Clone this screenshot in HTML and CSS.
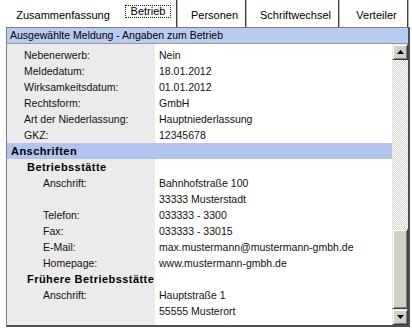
FILE: index.html
```html
<!DOCTYPE html>
<html lang="de">
<head>
    <meta charset="UTF-8">
    <meta name="viewport" content="width=device-width, initial-scale=1.0">
    <title>Angaben zum Betrieb</title>
    <link rel="stylesheet" href="styles.css">
</head>
<body>
    <div class="tabs">
        <div class="tab tab-first">Zusammenfassung</div>
        <div class="tab active"><span>Betrieb</span></div>
        <div class="tab tab-personen">Personen</div>
        <div class="tab tab-schrift">Schriftwechsel</div>
        <div class="tab tab-verteiler">Verteiler</div>
    </div>

    <div class="panel">
        <div class="panel-title">Ausgewählte Meldung - Angaben zum Betrieb</div>
        <div class="panel-body">
            <div class="list">
                <div class="row"><div class="label">Nebenerwerb:</div><div class="value">Nein</div></div>
                <div class="row"><div class="label">Meldedatum:</div><div class="value">18.01.2012</div></div>
                <div class="row"><div class="label">Wirksamkeitsdatum:</div><div class="value">01.01.2012</div></div>
                <div class="row"><div class="label">Rechtsform:</div><div class="value">GmbH</div></div>
                <div class="row"><div class="label">Art der Niederlassung:</div><div class="value">Hauptniederlassung</div></div>
                <div class="row"><div class="label">GKZ:</div><div class="value">12345678</div></div>

                <!-- Anschriften -->
                <div class="group">Anschriften</div>
                <div class="row"><div class="label head">Betriebsstätte</div><div class="value"></div></div>
                <div class="row"><div class="label lvl2">Anschrift:</div><div class="value">Bahnhofstraße 100</div></div>
                <div class="row"><div class="label lvl2"></div><div class="value">33333 Musterstadt</div></div>
                <div class="row"><div class="label lvl2">Telefon:</div><div class="value">033333 - 3300</div></div>
                <div class="row"><div class="label lvl2">Fax:</div><div class="value">033333 - 33015</div></div>
                <div class="row"><div class="label lvl2">E-Mail:</div><div class="value">max.mustermann@mustermann-gmbh.de</div></div>
                <div class="row"><div class="label lvl2">Homepage:</div><div class="value">www.mustermann-gmbh.de</div></div>
                <div class="row"><div class="label head">Frühere Betriebsstätte</div><div class="value"></div></div>
                <div class="row"><div class="label lvl2">Anschrift:</div><div class="value">Hauptstraße 1</div></div>
                <div class="row"><div class="label lvl2"></div><div class="value">55555 Musterort</div></div>
            </div>

            <div class="scrollbar">
                <div class="sb-btn">
                    <svg width="7" height="4" viewBox="0 0 7 4"><polygon points="0,4 3.5,0 7,4" fill="#000"/></svg>
                </div>
                <div class="sb-track"></div>
                <div class="sb-thumb"></div>
                <div class="sb-btn">
                    <svg width="7" height="4" viewBox="0 0 7 4"><polygon points="0,0 7,0 3.5,4" fill="#000"/></svg>
                </div>
            </div>
        </div>
    </div>
</body>
</html>
```

FILE: styles.css
```css
body {
    margin: 0;
    width: 412px;
    height: 331px;
    overflow: hidden;
    background-color: #fff;
    color: #000;
    font-family: "Liberation Sans", Arial, sans-serif;
    font-size: 10.5px;
}

/* tab strip */
.tabs {
    display: flex;
    height: 27px;
    font-size: 11px;
    line-height: 13px;
}
.tab {
    box-sizing: border-box;
    height: 27px;
    padding-top: 9px;
    text-align: center;
    white-space: nowrap;
    border-right: 1px solid #3f3f3f;
    box-shadow: 1px 0 0 #b4b4b4;
}
.tab-first {
    margin-left: 6px;
    width: 114px;
    border-right: none;
    box-shadow: none;
}
.tab.active {
    width: 57px;
    padding-top: 5px;
}
.tab.active span {
    display: inline-block;
    line-height: 11px;
    padding: 0 5px;
    border: 1px dotted #222;
}
.tab-personen {
    width: 69px;
    padding-left: 7px;
}
.tab-schrift {
    width: 93px;
    padding-left: 7px;
}
.tab-verteiler {
    width: 69px;
    padding-left: 7px;
}

/* panel */
.panel {
    box-sizing: border-box;
    margin-left: 6px;
    width: 404px;
    height: 300px;
    border: 1px solid #7c7c7c;
    border-right: 2px solid #505050;
    border-bottom: 2px solid #505050;
    display: flex;
    flex-direction: column;
}
.panel-title {
    box-sizing: border-box;
    height: 16px;
    line-height: 15px;
    padding-left: 3px;
    background-color: #b8cbf0;
    border-bottom: 1px solid #9a9a9a;
    white-space: nowrap;
}
.panel-body {
    flex: 1;
    min-height: 0;
    display: flex;
}
.list {
    flex: 1;
    overflow: hidden;
    padding-top: 3px;
    background: linear-gradient(to right, #ebebeb 148px, #fff 148px);
}
.row {
    display: flex;
    height: 16px;
    line-height: 16px;
}
.label {
    box-sizing: border-box;
    width: 148px;
    flex: none;
    padding-left: 17px;
    white-space: nowrap;
    color: #111;
}
.label.lvl2 {
    padding-left: 36px;
}
.label.head {
    padding-left: 20px;
    font-size: 11px;
    font-weight: bold;
    letter-spacing: 0.45px;
    color: #000;
}
.value {
    padding-left: 4px;
    white-space: nowrap;
    color: #111;
}
.group {
    height: 16px;
    line-height: 16px;
    padding-left: 4px;
    background-color: #b0c4ee;
    font-size: 11px;
    font-weight: bold;
    letter-spacing: 0.45px;
}

/* scrollbar */
.scrollbar {
    width: 16px;
    flex: none;
    display: flex;
    flex-direction: column;
}
.sb-btn,
.sb-thumb {
    box-sizing: border-box;
    background-color: #d4d0c8;
    border: 1px solid;
    border-color: #e8e6e0 #404040 #404040 #e8e6e0;
    box-shadow: inset 1px 1px 0 #fff, inset -1px -1px 0 #808080;
}
.sb-btn {
    height: 16px;
    display: flex;
    align-items: center;
    justify-content: center;
}
.sb-thumb {
    height: 80px;
}
.sb-track {
    flex: 1;
    background: repeating-conic-gradient(#d4d0c8 0 25%, #fff 0 50%) 0 0 / 2px 2px;
}
```
